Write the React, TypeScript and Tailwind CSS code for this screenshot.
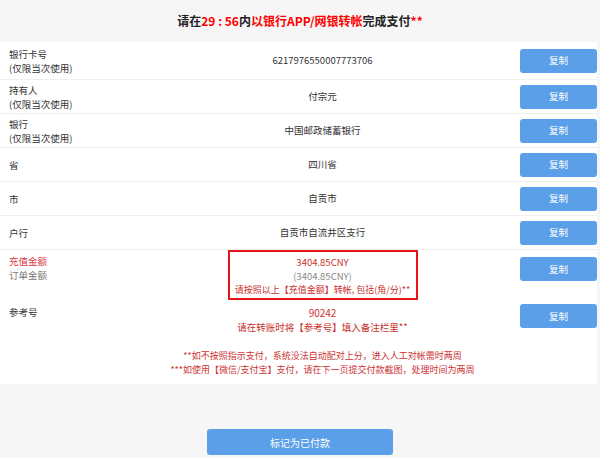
import React from 'react';

interface InfoRow {
    label: string;
    sub?: string;
    value: string;
    tall?: boolean;
}

const rows: InfoRow[] = [
    { label: '银行卡号', sub: '(仅限当次使用)', value: '6217976550007773706', tall: true },
    { label: '持有人', sub: '(仅限当次使用)', value: '付宗元' },
    { label: '银行', sub: '(仅限当次使用)', value: '中国邮政储蓄银行' },
    { label: '省', value: '四川省' },
    { label: '市', value: '自贡市' },
    { label: '户行', value: '自贡市自流井区支行' },
];

const CopyButton: React.FC = () => (
    <button className="w-[77px] h-[24px] bg-[#5b9fe8] text-white text-[9.5px] rounded-[3px] shrink-0">
        复制
    </button>
);

export default function App() {
    return (
        <div
            className="w-[600px] h-[458px] bg-[#f6f6f6] text-[#333] overflow-hidden"
            style={{ fontFamily: '"Noto Sans CJK SC", "Noto Sans", sans-serif' }}
        >
            {/* Header */}
            <div className="h-[42px] flex items-center justify-center text-[12px] font-bold text-[#222]">
                <span>请在</span>
                <span className="text-[#f00] whitespace-pre">29 : 56</span>
                <span>内</span>
                <span className="text-[#f00]">以银行APP/网银转帐</span>
                <span>完成支付</span>
                <span className="text-[#f00]">**</span>
            </div>

            {/* Info panel */}
            <div className="w-[597px] bg-white text-[9.5px]">
                {rows.map((r) => (
                    <div
                        key={r.label}
                        className={`flex items-center border-b border-[#efefef] ${r.tall ? 'h-[38px]' : 'h-[34px]'}`}
                    >
                        <div className="w-[125px] pl-[9px] leading-[14px]">
                            <div>{r.label}</div>
                            {r.sub && <div>{r.sub}</div>}
                        </div>
                        <div className="flex-1 text-center">{r.value}</div>
                        <CopyButton />
                    </div>
                ))}

                {/* Amount row */}
                <div className="flex items-start h-[51px]">
                    <div className="w-[125px] pl-[9px] pt-[4px] leading-[14px]">
                        <div className="text-[#d9363e]">充值金额</div>
                        <div className="text-[#777]">订单金额</div>
                    </div>
                    <div className="flex-1 flex justify-center">
                        <div className="w-[190px] h-[50px] border-2 border-[#e8141c] pt-[3px] text-center leading-[14px] text-[9px]">
                            <div className="text-[#c9302c] text-[9.5px]">3404.85CNY</div>
                            <div className="text-[#888] text-[9.5px]">(3404.85CNY)</div>
                            <div className="text-[#c9302c] whitespace-nowrap">请按照以上【充值金额】转帐, 包括(角/分)**</div>
                        </div>
                    </div>
                    <div className="pt-[7px]">
                        <CopyButton />
                    </div>
                </div>

                {/* Reference row */}
                <div className="flex items-start h-[43px]">
                    <div className="w-[125px] pl-[9px] pt-[4px] leading-[14px]">参考号</div>
                    <div className="flex-1 pt-[5px] text-center leading-[14px] text-[#c9302c]">
                        <div className="text-[10px]">90242</div>
                        <div>请在转账时将【参考号】填入备注栏里**</div>
                    </div>
                    <div className="pt-[3px]">
                        <CopyButton />
                    </div>
                </div>

                {/* Notes */}
                <div className="flex pt-[5px] pb-[7px]">
                    <div className="w-[125px]" />
                    <div className="flex-1 text-center leading-[14px] text-[9px] text-[#cc3333]">
                        <div>**如不按照指示支付，系统没法自动配对上分，进入人工对帐需时两周</div>
                        <div>***如使用【微信/支付宝】支付，请在下一页提交付款截图，处理时间为两周</div>
                    </div>
                    <div className="w-[77px]" />
                </div>
            </div>

            {/* Confirm */}
            <div className="flex justify-center mt-[45px]">
                <button className="w-[186px] h-[26px] bg-[#5b9fe8] text-white text-[10px] rounded-[3px]">
                    标记为已付款
                </button>
            </div>
        </div>
    );
}
